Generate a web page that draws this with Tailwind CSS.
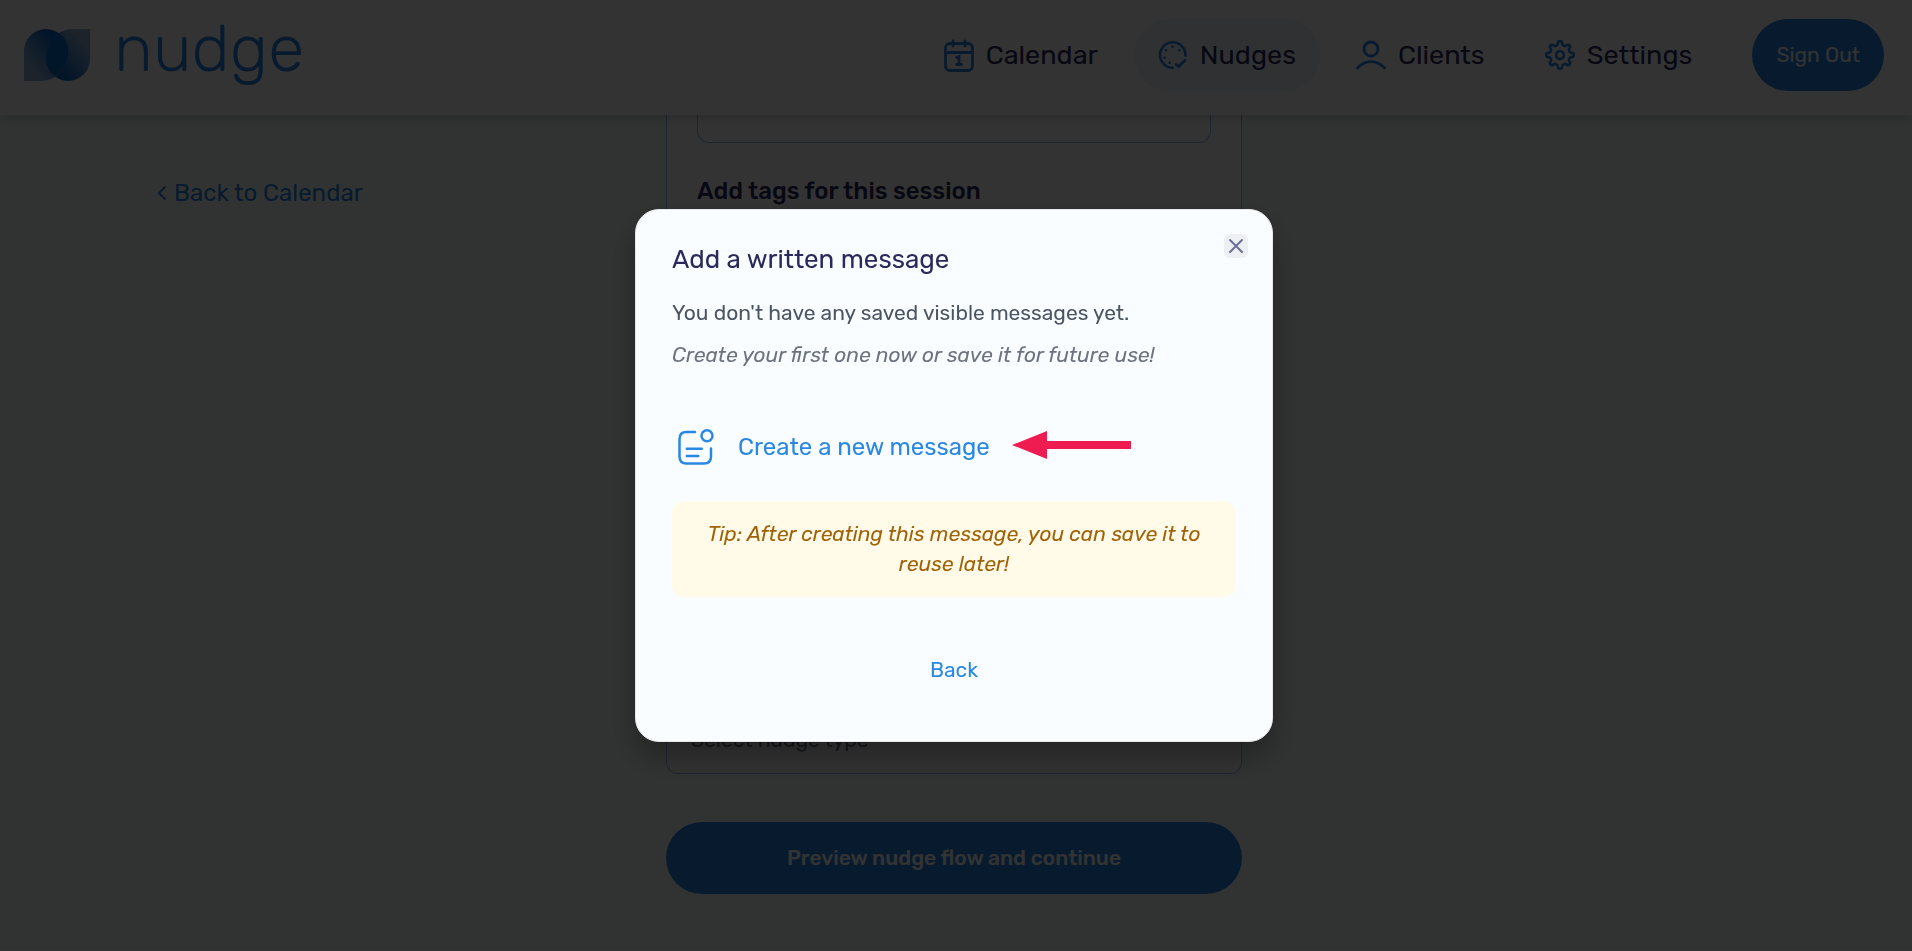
<!DOCTYPE html>
<html lang="en">
<head>
    <meta charset="UTF-8">
    <meta name="viewport" content="width=device-width, initial-scale=1.0">
    <title>Nudge</title>
    <script src="https://cdn.jsdelivr.net/npm/@tailwindcss/browser@4"></script>
</head>
<body class="flex h-screen flex-col overflow-hidden bg-[#f2fff8] font-['Rubik','Roboto',sans-serif] text-[#29295c]">
    <!-- Header -->
    <header class="relative flex items-center justify-between bg-white pt-[19px] pr-7 pb-6 pl-6 shadow-[0_2px_12px_rgba(0,0,0,0.2)]">
        <a href="#" class="flex items-center gap-6 text-[#2a88e5]">
            <svg class="h-[52px] w-[66px]" viewBox="0 0 66 52" aria-hidden="true">
                <defs>
                    <linearGradient id="leafLeft" x1="0.8" y1="0.2" x2="0.2" y2="0.8">
                        <stop offset="0.1" stop-color="#0a68c8"/>
                        <stop offset="1" stop-color="#8fb0d8"/>
                    </linearGradient>
                    <linearGradient id="leafRight" x1="0.2" y1="0.8" x2="0.8" y2="0.2">
                        <stop offset="0.1" stop-color="#0a68c8"/>
                        <stop offset="1" stop-color="#8fb0d8"/>
                    </linearGradient>
                </defs>
                <path fill="url(#leafRight)" d="M66 0v30a22 22 0 0 1-44 0C22 12 34 0 50 0z"/>
                <path fill="url(#leafLeft)" d="M0 52V22a22 22 0 0 1 44 0C44 40 32 52 16 52z"/>
                <path fill="#0a6ed3" d="M35.500 4.500A22 22 0 0 1 44 22c0 11-5 20-13 25A22 22 0 0 1 22 30c0-11 5.500-20 13.500-25.500z"/>
            </svg>
            <span class="pb-3 text-[66px] leading-[60px] font-light">nudge</span>
        </a>
        <nav class="flex items-center gap-3">
            <a href="#" class="flex h-[72px] items-center gap-3 rounded-full px-6 text-[27px]">
                <svg class="h-9 w-[30px] text-[#2a88e5]" viewBox="0 0 30 36" fill="none" stroke="currentColor" stroke-width="2.800" stroke-linecap="round" aria-hidden="true">
                    <rect x="1.500" y="6.500" width="27" height="27" rx="4.500"/>
                    <path d="M1.500 15.500h27M9 4v5M21 4v5"/>
                    <path d="M12.500 20.500l2.500-1v8M12.500 27.500h5"/>
                </svg>
                Calendar
            </a>
            <a href="#" class="flex h-[72px] items-center gap-3 rounded-full bg-[#eef5fd] px-6 text-[27px]">
                <svg class="size-[30px] text-[#2a88e5]" viewBox="0 0 30 30" fill="none" stroke="currentColor" stroke-width="2.600" stroke-linecap="round" stroke-linejoin="round" aria-hidden="true">
                    <path d="M27.400 15.700A12.700 12.700 0 1 0 15 27.700"/>
                    <path d="M18 24.300l2.400 2.400L27 20.200"/>
                    <path d="M14.600 6.700v.01M8 10.300v.01M21.400 10.300v.01M6.500 17.700v.01M11.500 22.700v.01"/>
                </svg>
                Nudges
            </a>
            <a href="#" class="flex h-[72px] items-center gap-3 rounded-full px-6 text-[27px]">
                <svg class="size-[30px] text-[#2a88e5]" viewBox="0 0 30 30" fill="none" stroke="currentColor" stroke-width="2.800" stroke-linecap="round" aria-hidden="true">
                    <circle cx="15" cy="9" r="7"/>
                    <path d="M1.500 28C5.500 23.800 10 21.700 15 21.700s9.500 2.100 13.500 6.300"/>
                </svg>
                Clients
            </a>
            <a href="#" class="flex h-[72px] items-center gap-3 rounded-full px-6 text-[27px]">
                <svg class="size-[30px] text-[#2a88e5]" viewBox="0 0 30 30" fill="none" stroke="currentColor" stroke-width="2.600" stroke-linejoin="round" aria-hidden="true">
                    <path d="M26.800 12.900A2.100 2.100 0 0 1 26.800 17.100A2.800 2.800 0 0 0 24.800 21.900A2.100 2.100 0 0 1 21.900 24.800A2.800 2.800 0 0 0 17.100 26.800A2.100 2.100 0 0 1 12.900 26.800A2.800 2.800 0 0 0 8.100 24.800A2.100 2.100 0 0 1 5.200 21.900A2.800 2.800 0 0 0 3.200 17.100A2.100 2.100 0 0 1 3.200 12.900A2.800 2.800 0 0 0 5.200 8.100A2.100 2.100 0 0 1 8.100 5.200A2.800 2.800 0 0 0 12.900 3.200A2.100 2.100 0 0 1 17.100 3.200A2.800 2.800 0 0 0 21.900 5.200A2.100 2.100 0 0 1 24.800 8.100A2.800 2.800 0 0 0 26.800 12.900z"/>
                    <circle cx="15" cy="15" r="3.900"/>
                </svg>
                Settings
            </a>
            <button type="button" class="ml-6 h-[72px] rounded-full bg-[#2a88e5] px-6 text-[21px] text-white">Sign Out</button>
        </nav>
    </header>

    <!-- Session form -->
    <main class="grid grid-cols-[1fr_576px_1fr] pr-1">
        <div class="pt-[60px] pl-[156px]">
            <a href="#" class="flex items-center gap-2 text-2xl leading-9 text-[#2a88e5]">
                <svg class="h-4 w-[10px]" viewBox="0 0 10 16" fill="none" stroke="currentColor" stroke-width="2" stroke-linecap="round" stroke-linejoin="round" aria-hidden="true">
                    <path d="M9 2L3 8l6 6"/>
                </svg>
                Back to Calendar
            </a>
        </div>
        <div>
            <section class="rounded-b-xl border border-t-0 border-[#8fb9ee] bg-white">
                <div class="px-[30px]">
                    <textarea aria-label="Session notes" class="block h-7 w-full resize-none rounded-b-xl border border-t-0 border-[#8fb9ee]"></textarea>
                    <label for="tags" class="mt-[30px] block text-2xl leading-9 font-medium">Add tags for this session</label>
                    <input type="text" id="tags" class="mt-4 h-[60px] w-full rounded-xl border border-[#8fb9ee] px-4">
                </div>
                <p class="mt-[440px] px-6 pb-[18px] text-[21px] leading-[30px] text-[#6b7280]">Select nudge type</p>
            </section>
            <button type="button" class="mt-12 h-[72px] w-full rounded-full bg-[#2a88e5] text-[21px] font-medium text-white">Preview nudge flow and continue</button>
        </div>
    </main>
    <footer class="mt-auto h-px bg-white shadow-[0_-2px_6px_rgba(0,0,0,0.2)]"></footer>

    <!-- Message dialog -->
    <div class="fixed inset-0 flex items-center justify-center bg-black/80 pr-1">
        <div role="dialog" aria-modal="true" aria-labelledby="dialogTitle" class="relative w-full max-w-[638px] rounded-3xl border border-[#e5e7eb] bg-[#fafdff] px-9 pt-8 pb-14 shadow-[0_15px_30px_rgba(0,0,0,0.3)]">
            <button type="button" id="closeBtn" aria-label="Close" class="absolute top-6 right-6 flex size-6 items-center justify-center rounded-md bg-[#eeeff3] text-[#6b6f96]">
                <svg class="size-4" viewBox="0 0 16 16" fill="none" stroke="currentColor" stroke-width="2" stroke-linecap="round" aria-hidden="true">
                    <path d="M2 2l12 12M14 2L2 14"/>
                </svg>
            </button>
            <h2 id="dialogTitle" class="text-[26px] leading-9">Add a written message</h2>
            <p class="mt-5 text-[21px] leading-[30px] text-[#4b5563]">You don't have any saved visible messages yet.</p>
            <p class="mt-3 text-[21px] leading-[30px] text-[#6b7280] italic">Create your first one now or save it for future use!</p>
            <div class="mt-[59px] flex items-start gap-[22px] pl-[6px]">
                <button type="button" class="flex items-center gap-6 text-2xl leading-9 text-[#2a88e5]">
                    <svg class="size-9" viewBox="0 0 36 36" fill="none" stroke="currentColor" stroke-width="2.500" stroke-linecap="round" aria-hidden="true">
                        <path d="M17 3H8.500Q1.500 3 1.500 10v17.500q0 7 7 7H26q7 0 7-7V19.500"/>
                        <circle cx="29" cy="6.800" r="5.500"/>
                        <path d="M8.800 19.700H23.800M8.800 27H20.300"/>
                    </svg>
                    Create a new message
                </button>
                <svg class="h-8 w-[119px]" viewBox="0 0 119 32" fill="#ee1c51" aria-hidden="true">
                    <path d="M0 16L35 2v10h84v8H35v10z"/>
                </svg>
            </div>
            <p class="mt-9 rounded-xl bg-[#fffbe8] px-6 py-[18px] text-center text-[21px] leading-[30px] text-[#a16207] italic">Tip: After creating this message, you can save it to reuse later!</p>
            <div class="mt-[58px] flex justify-center">
                <button type="button" class="text-[21px] leading-[30px] text-[#2a88e5]">Back</button>
            </div>
        </div>
    </div>

    <script>
        // Close the dialog
        const closeBtn = document.getElementById("closeBtn");

        closeBtn.addEventListener("click", () => {
            closeBtn.closest(".fixed").remove();
        });
    </script>
</body>
</html>
